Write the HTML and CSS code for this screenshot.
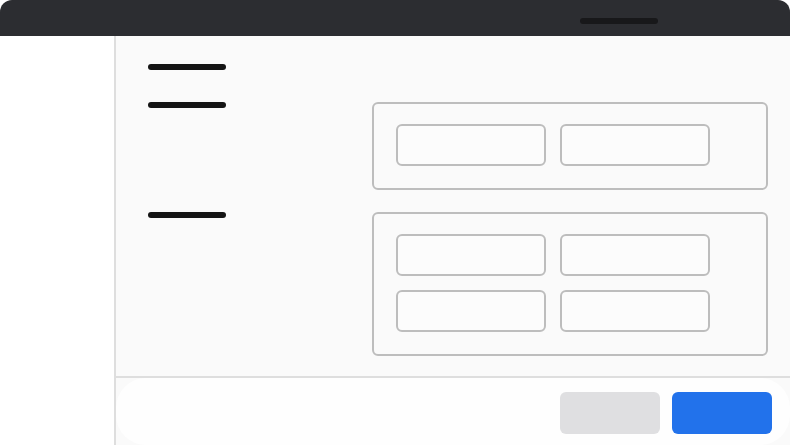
FILE: index.html
```html
<!DOCTYPE html>
<html lang="en">
<head>
    <meta charset="UTF-8">
    <meta name="viewport" content="width=device-width, initial-scale=1.0">
    <title>Settings</title>
    <link rel="stylesheet" href="styles.css">
</head>
<body>

<div class="window">
    <div class="titlebar">
        <span class="title-pill"></span>
    </div>

    <div class="layout">
        <aside class="sidebar"></aside>

        <div class="main">
            <div class="content">
                <span class="label heading"></span>

                <div class="row">
                    <span class="label"></span>
                    <div class="group">
                        <div class="field"></div>
                        <div class="field"></div>
                    </div>
                </div>

                <div class="row">
                    <span class="label"></span>
                    <div class="group">
                        <div class="field"></div>
                        <div class="field"></div>
                        <div class="field"></div>
                        <div class="field"></div>
                    </div>
                </div>
            </div>

            <div class="footer">
                <div class="footer-inner">
                    <button class="btn btn-cancel"></button>
                    <button class="btn btn-ok"></button>
                </div>
            </div>
        </div>
    </div>
</div>

</body>
</html>
```

FILE: styles.css
```css
body {
    font-family: "Liberation Sans", Arial, sans-serif;
    margin: 0;
    background-color: #fff;
    width: 790px;
    height: 445px;
    overflow: hidden;
}
.window {
    display: flex;
    flex-direction: column;
    height: 445px;
}
.titlebar {
    flex-shrink: 0;
    height: 36px;
    background-color: #2c2d31;
    border-radius: 12px 12px 0 0;
    display: flex;
    align-items: flex-start;
    padding-left: 580px;
    box-sizing: border-box;
}
.title-pill {
    width: 78px;
    height: 6px;
    margin-top: 18px;
    border-radius: 3px;
    background-color: #18181a;
}
.layout {
    flex: 1;
    min-height: 0;
    display: flex;
}
.sidebar {
    width: 114px;
    background-color: #fff;
    border-right: 2px solid #dedede;
}
.main {
    flex: 1;
    display: flex;
    flex-direction: column;
    background-color: #fafafa;
}
.content {
    flex: 1;
    min-height: 0;
    padding: 28px 22px 0 32px;
    display: flex;
    flex-direction: column;
    gap: 22px;
}
.label {
    display: block;
    width: 78px;
    height: 6px;
    border-radius: 3px;
    background-color: #141414;
}
.heading {
    margin-bottom: 10px;
}
.row {
    display: grid;
    grid-template-columns: 224px 1fr;
}
.group {
    border: 2px solid #bdbdbd;
    border-radius: 6px;
    padding: 20px 22px 22px;
    display: grid;
    grid-template-columns: repeat(2, 150px);
    gap: 14px;
}
.field {
    height: 42px;
    box-sizing: border-box;
    border: 2px solid #bdbdbd;
    border-radius: 6px;
    background-color: #fcfcfc;
}
.footer {
    flex-shrink: 0;
    height: 67px;
    border-top: 2px solid #dedede;
    background-color: #fafafa;
}
.footer-inner {
    height: 100%;
    background-color: #fefefe;
    border-radius: 30px;
    display: flex;
    justify-content: flex-end;
    align-items: flex-start;
    gap: 12px;
    padding: 14px 18px 0 0;
    box-sizing: border-box;
}
.btn {
    width: 100px;
    height: 42px;
    border: none;
    border-radius: 6px;
}
.btn-cancel {
    background-color: #dfdfe1;
}
.btn-ok {
    background-color: #2272eb;
}
```
